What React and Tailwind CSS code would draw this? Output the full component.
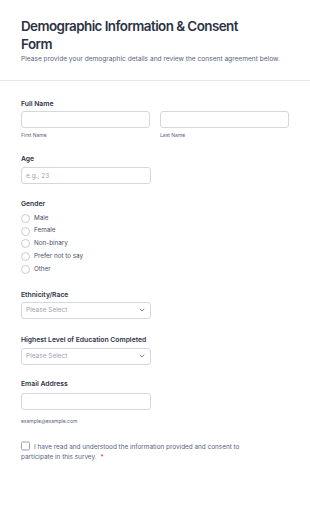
import React from "react";

const font = { fontFamily: "Inter, 'Liberation Sans', sans-serif" };

const Label = ({ children }) => (
  <p className="text-[6.8px] font-semibold text-[#2c3345] leading-[10px]">{children}</p>
);

const TextInput = ({ placeholder, className = "" }) => (
  <input
    type="text"
    placeholder={placeholder}
    className={`block h-[17px] rounded-[3px] border border-[#d4d6e0] bg-white px-[4px] text-[6.5px] text-[#2c3345] placeholder:text-[#9aa1b5] outline-none ${className}`}
  />
);

const Select = () => (
  <div className="flex h-[17px] w-[130px] items-center justify-between rounded-[3px] border border-[#d4d6e0] bg-white pl-[4px] pr-[5px]">
    <span className="text-[6.5px] leading-none text-[#9aa1b5]">Please Select</span>
    <svg width="6" height="4" viewBox="0 0 6 4" fill="none">
      <path d="M1 1l2 2 2-2" stroke="#6b7280" strokeWidth="0.9" strokeLinecap="round" strokeLinejoin="round" />
    </svg>
  </div>
);

const genders = ["Male", "Female", "Non-binary", "Prefer not to say", "Other"];

export default function App() {
  return (
    <div className="min-h-screen bg-white" style={font}>
      <div className="px-[21px] pt-[17px] pb-[16px]">
        <h1 className="max-w-[245px] text-[13.4px] font-semibold leading-[18px] tracking-[-0.55px] text-[#2c3345]">
          Demographic Information &amp; Consent Form
        </h1>
        <p className="mt-[2px] text-[6.6px] leading-[9px] text-[#57647e]">
          Please provide your demographic details and review the consent agreement below.
        </p>
      </div>
      <div className="h-px bg-[#e6e7ec]" />

      <div className="flex flex-col px-[21px] pt-[18px]">
        <div>
          <Label>Full Name</Label>
          <div className="mt-[2px] grid grid-cols-2 gap-[10px]">
            <div className="flex flex-col">
              <TextInput className="w-full" />
              <span className="mt-[4px] text-[5px] leading-[7px] text-[#57647e]">First Name</span>
            </div>
            <div className="flex flex-col">
              <TextInput className="w-full" />
              <span className="mt-[4px] text-[5px] leading-[7px] text-[#57647e]">Last Name</span>
            </div>
          </div>
        </div>

        <div className="mt-[15px]">
          <Label>Age</Label>
          <TextInput placeholder="e.g., 23" className="mt-[3px] w-[130px]" />
        </div>

        <div className="mt-[15px]">
          <Label>Gender</Label>
          <div className="mt-[5px] flex flex-col gap-[4px]">
            {genders.map((g) => (
              <label key={g} className="flex h-[8.75px] items-center gap-[4px]">
                <span className="h-[9px] w-[9px] rounded-full border border-[#c8cbd6] bg-white" />
                <span className="text-[6.3px] text-[#464f68]">{g}</span>
              </label>
            ))}
          </div>
        </div>

        <div className="mt-[16px]">
          <Label>Ethnicity/Race</Label>
          <div className="mt-[2px]">
            <Select />
          </div>
        </div>

        <div className="mt-[16px]">
          <Label>Highest Level of Education Completed</Label>
          <div className="mt-[3px]">
            <Select />
          </div>
        </div>

        <div className="mt-[14px]">
          <Label>Email Address</Label>
          <TextInput className="mt-[4px] w-[130px]" />
          <p className="mt-[8px] text-[5px] leading-[7px] text-[#57647e]">example@example.com</p>
        </div>

        <div className="mt-[15px] w-[234px] text-[6.4px] leading-[10px] text-[#57647e]">
          <span className="mr-[4px] inline-block h-[9px] w-[9px] translate-y-[1.5px] rounded-[2px] border border-[#9aa1b5] bg-white" />
          I have read and understood the information provided and consent to participate in this survey.
          <span className="ml-[4px] text-[#f23a3c]">*</span>
        </div>
      </div>
    </div>
  );
}
